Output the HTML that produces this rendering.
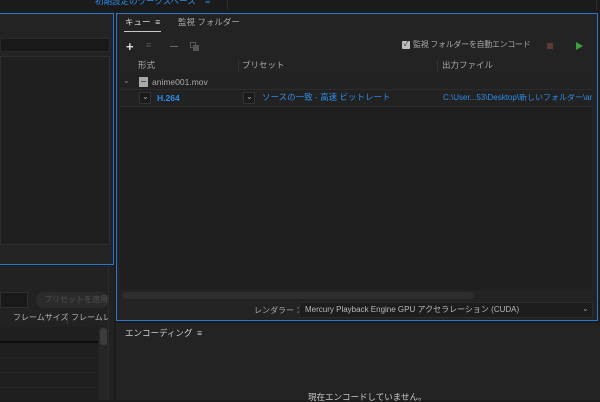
<!DOCTYPE html>
<html><head><meta charset="utf-8"><style>
*{margin:0;padding:0;box-sizing:border-box}
body{width:600px;height:400px;overflow:hidden;background:#1b1b1b;font-family:"Liberation Sans","Noto Sans CJK JP",sans-serif;font-size:8px;color:#a8a8a8;position:relative}
.a{position:absolute}
.t{white-space:nowrap;line-height:1}
.blue{color:#2d8ceb}
</style></head><body>
<div class="a" style="left:0;top:0;width:600px;height:12px;background:#1b1b1b"></div>
<div class="a t blue" style="left:95px;top:-3px;font-size:8.5px">初期設定のワークスペース&nbsp;&nbsp;&nbsp;&nbsp;≡</div>
<div class="a" style="left:227px;top:0;width:1px;height:10px;background:#2e2e2e"></div>
<div class="a" style="left:596px;top:0;width:1px;height:10px;background:#2e2e2e"></div>

<div class="a" style="left:-2px;top:13px;width:116px;height:252px;border:1px solid #2a78d0;background:#232323"></div>
<div class="a" style="left:0;top:38px;width:110px;height:14px;background:#191919;border:1px solid #2a2a2a"></div>
<div class="a" style="left:0;top:56px;width:110px;height:189px;background:#1f1f1f;border:1px solid #2e2e2e"></div>

<div class="a" style="left:0;top:266px;width:114px;height:134px;background:#222"></div>
<div class="a" style="left:0;top:292px;width:28px;height:16px;background:#191919;border:1px solid #2e2e2e"></div>
<div class="a t" style="left:36px;top:292px;width:73px;height:16px;border-radius:8px;background:#2b2b2b;color:#4e4e4e;font-size:8px;padding:4px 0 0 8px">プリセットを適用</div>
<div class="a t" style="left:13px;top:314px;color:#b4b4b4;font-size:8px">フレームサイズ</div>
<div class="a" style="left:67px;top:314px;width:1px;height:10px;background:#3a3a3a"></div>
<div class="a t" style="left:71px;top:314px;color:#b4b4b4;font-size:8px;width:37px;overflow:hidden">フレームレ</div>
<div class="a" style="left:0;top:327px;width:98px;height:73px;background:#1f1f1f"></div>
<div class="a" style="left:0;top:341px;width:98px;height:2px;background:#0d0d0d"></div>
<div class="a" style="left:0;top:357px;width:98px;height:1px;background:#262626"></div>
<div class="a" style="left:0;top:372px;width:98px;height:1px;background:#262626"></div>
<div class="a" style="left:0;top:387px;width:98px;height:1px;background:#262626"></div>
<div class="a" style="left:99px;top:327px;width:9px;height:73px;background:#262626"></div>
<div class="a" style="left:100px;top:328px;width:7px;height:17px;border-radius:3px;background:#3c3c3c"></div>
<div class="a" style="left:108px;top:266px;width:1px;height:134px;background:#2c2c2c"></div>

<div class="a" style="left:116px;top:13px;width:482px;height:308px;border:1px solid #2a78d0;background:#232323"></div>
<div class="a t" style="left:125px;top:18px;color:#d8d8d8;font-size:8.5px">キュー&nbsp;&nbsp;≡</div>
<div class="a" style="left:124px;top:31px;width:37px;height:1px;background:#c8c8c8"></div>
<div class="a t" style="left:178px;top:18px;color:#a8a8a8;font-size:8.5px">監視 フォルダー</div>
<div class="a t" style="left:126px;top:40px;color:#e0e0e0;font-size:13px;font-weight:bold">+</div>
<div class="a t" style="left:146px;top:41px;color:#555;font-size:9px">≡</div>
<div class="a" style="left:170px;top:46px;width:8px;height:1px;background:#666"></div>
<div class="a" style="left:190px;top:42px;width:6px;height:6px;border:1px solid #555"></div>
<div class="a" style="left:193px;top:45px;width:6px;height:6px;background:#555"></div>
<div class="a" style="left:402px;top:41px;width:8px;height:8px;border-radius:1px;background:#bdbdbd;color:#222;font-size:7px;line-height:8px;text-align:center">✓</div>
<div class="a t" style="left:413px;top:41px;color:#a8a8a8;font-size:8px;letter-spacing:-0.3px">監視 フォルダーを自動エンコード</div>
<div class="a" style="left:547px;top:43px;width:6px;height:6px;background:#5a3a33"></div>
<div class="a" style="left:576px;top:42px;width:0;height:0;border-left:7px solid #3f9f3f;border-top:4px solid transparent;border-bottom:4px solid transparent"></div>
<div class="a t" style="left:138px;top:61px;font-size:8.5px">形式</div>
<div class="a" style="left:238px;top:60px;width:1px;height:11px;background:#333"></div>
<div class="a t" style="left:242px;top:61px;font-size:8.5px">プリセット</div>
<div class="a" style="left:437px;top:60px;width:1px;height:11px;background:#333"></div>
<div class="a t" style="left:442px;top:61px;font-size:8.5px">出力ファイル</div>
<div class="a" style="left:120px;top:74px;width:472px;height:216px;background:#1f1f1f"></div>
<div class="a" style="left:120px;top:74px;width:472px;height:16px;background:#222;border-bottom:1px solid #2c2c2c"></div>
<div class="a t" style="left:123px;top:77px;color:#888;font-size:8px">⌄</div>
<div class="a" style="left:139px;top:77px;width:9px;height:10px;background:#aaa"></div>
<div class="a" style="left:141px;top:81px;width:5px;height:1px;background:#555"></div>
<div class="a t" style="left:152px;top:78px;color:#a8a8a8;font-size:8.5px">anime001.mov</div>
<div class="a" style="left:120px;top:90px;width:472px;height:17px;background:#222;border-bottom:1px solid #2c2c2c"></div>
<div class="a" style="left:139px;top:92px;width:12px;height:12px;background:#1a1a1a;border:1px solid #333"></div>
<div class="a t" style="left:142px;top:93px;color:#aaa;font-size:8px">⌄</div>
<div class="a t blue" style="left:157px;top:94px;font-size:8.5px;font-weight:bold">H.264</div>
<div class="a" style="left:243px;top:92px;width:12px;height:12px;background:#1a1a1a;border:1px solid #333"></div>
<div class="a t" style="left:246px;top:93px;color:#aaa;font-size:8px">⌄</div>
<div class="a t blue" style="left:262px;top:93px;font-size:8.5px">ソースの一致 - 高速 ビットレート</div>
<div class="a t blue" style="left:443px;top:94px;font-size:8px;width:149px;overflow:hidden">C:\User...53\Desktop\新しいフォルダー\anime</div>
<div class="a" style="left:122px;top:292px;width:352px;height:7px;border-radius:4px;background:#2e2e2e"></div>
<div class="a t" style="left:254px;top:307px;font-size:8px">レンダラー：</div>
<div class="a" style="left:299px;top:302px;width:294px;height:16px;background:#1d1d1d;border:1px solid #2c2c2c"></div>
<div class="a t" style="left:305px;top:306px;color:#b8b8b8;font-size:8px">Mercury Playback Engine GPU アクセラレーション (CUDA)</div>
<div class="a t" style="left:582px;top:305px;color:#999;font-size:8px">⌄</div>

<div class="a" style="left:116px;top:323px;width:484px;height:77px;background:#232323"></div>
<div class="a t" style="left:125px;top:329px;color:#d0d0d0;font-size:8.5px">エンコーディング&nbsp;&nbsp;≡</div>
<div class="a t" style="left:308px;top:393px;color:#c8c8c8;font-size:8.5px">現在エンコードしていません。</div>
</body></html>
